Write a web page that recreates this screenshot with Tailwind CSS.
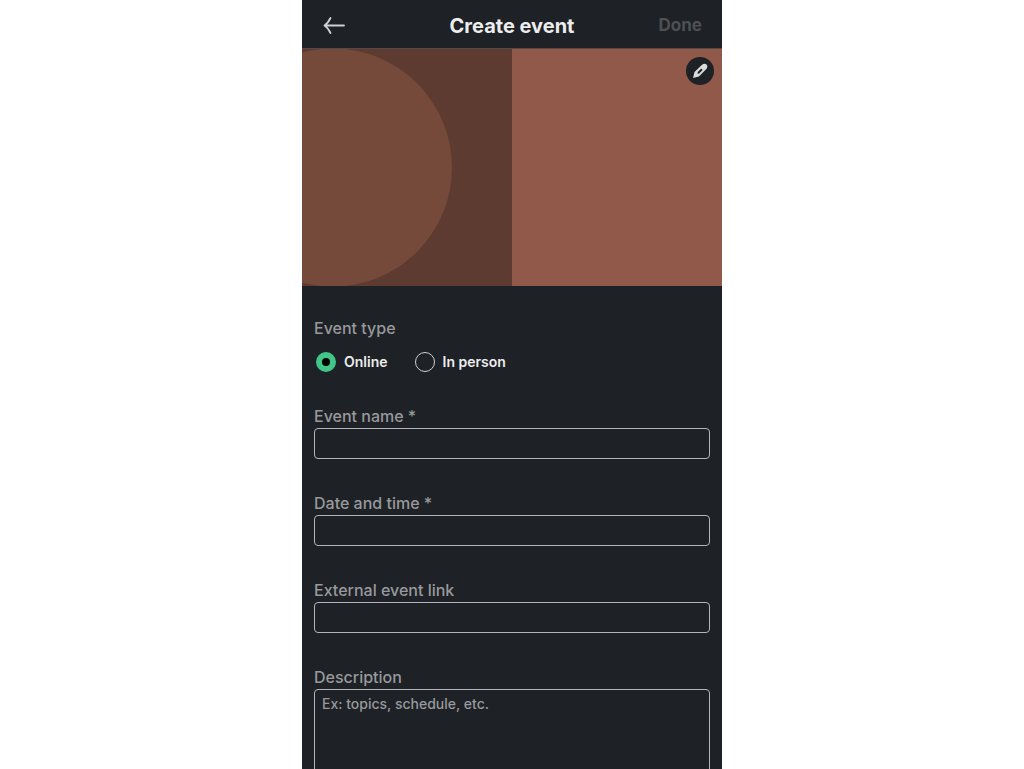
<!DOCTYPE html>
<html lang="en">
<head>
  <meta charset="UTF-8">
  <meta name="viewport" content="width=device-width, initial-scale=1.0">
  <title>Create event</title>
  <script src="https://cdn.jsdelivr.net/npm/@tailwindcss/browser@4"></script>
</head>
<body class="bg-white h-screen overflow-hidden font-['Inter',sans-serif]">
  <div class="mx-auto w-full max-w-[420px] min-h-screen bg-[#1e2125]">
    <header class="grid grid-cols-3 items-center h-[49px] px-5 pt-1 border-b border-[#55494a]">
      <button type="button" aria-label="Back" class="justify-self-start">
        <svg class="w-6 h-6" viewBox="0 0 24 24" fill="none" stroke="#d0d0d2" stroke-width="1.8" stroke-linecap="round" stroke-linejoin="round">
          <path d="M22 11.500H2.500M8.500 4C7 7 5 10 2.500 11.500C5 13 7 16 8.500 19"/>
        </svg>
      </button>
      <h1 class="text-xl font-bold text-[#ededee] text-center whitespace-nowrap">Create event</h1>
      <button type="button" disabled class="justify-self-end text-[17px] font-bold text-[#4e5053]">Done</button>
    </header>

    <!-- Banner -->
    <div class="relative">
      <svg class="block w-full" viewBox="0 0 420 237">
        <rect width="420" height="237" fill="#5d3b31"/>
        <circle cx="31" cy="118.500" r="119" fill="#764a3a"/>
        <rect x="210" width="210" height="237" fill="#91594a"/>
      </svg>
      <button type="button" aria-label="Edit banner" class="absolute top-2 right-2 w-7 h-7 rounded-full bg-[#1e2125] flex items-center justify-center">
        <svg class="w-5 h-5" viewBox="0 0 20 20">
          <path fill="#dcdcdd" fill-rule="evenodd" d="M3 17L4.500 11L11.800 3.900Q14.500 1.600 16.500 3.500Q18.400 5.600 16.100 8.200L8.900 15.500ZM7.600 12.900L9.200 12.400L12.600 9L11.200 7.600L7.800 11Z"/>
        </svg>
      </button>
    </div>

    <form class="px-3 pt-[30px]">
      <fieldset>
        <legend class="text-base leading-6 font-medium text-[#98999c]">Event type</legend>
        <div class="flex gap-[27px] pt-3">
          <label class="flex items-center gap-2 text-sm leading-5 font-semibold text-[#ededee]">
            <input type="radio" name="type" checked class="appearance-none ml-0.5 w-5 h-5 rounded-full border border-[#d0d0d2] checked:border-[6px] checked:border-[#41c588] checked:bg-black">
            Online
          </label>
          <label class="flex items-center gap-2 text-sm leading-5 font-semibold text-[#ededee]">
            <input type="radio" name="type" class="appearance-none w-5 h-5 rounded-full border border-[#d0d0d2] checked:border-[6px] checked:border-[#41c588] checked:bg-black">
            In person
          </label>
        </div>
      </fieldset>

      <div class="flex flex-col gap-8 pt-8">
        <div>
          <label for="name" class="block text-base leading-6 font-medium text-[#98999c]">Event name *</label>
          <input id="name" type="text" class="block w-full h-[31px] px-2 text-sm text-[#ededee] border border-[#b4b5b8] rounded outline-none">
        </div>
        <div>
          <label for="date" class="block text-base leading-6 font-medium text-[#98999c]">Date and time *</label>
          <input id="date" type="text" class="block w-full h-[31px] px-2 text-sm text-[#ededee] border border-[#b4b5b8] rounded outline-none">
        </div>
        <div>
          <label for="link" class="block text-base leading-6 font-medium text-[#98999c]">External event link</label>
          <input id="link" type="url" class="block w-full h-[31px] px-2 text-sm text-[#ededee] border border-[#b4b5b8] rounded outline-none">
        </div>
        <div>
          <label for="description" class="block text-base leading-6 font-medium text-[#98999c]">Description</label>
          <textarea id="description" placeholder="Ex: topics, schedule, etc." class="block w-full h-32 px-[7px] py-1 text-sm leading-5 font-medium text-[#ededee] placeholder:text-[#98999c] border border-[#b4b5b8] rounded outline-none resize-none"></textarea>
        </div>
      </div>
    </form>
  </div>
</body>
</html>
